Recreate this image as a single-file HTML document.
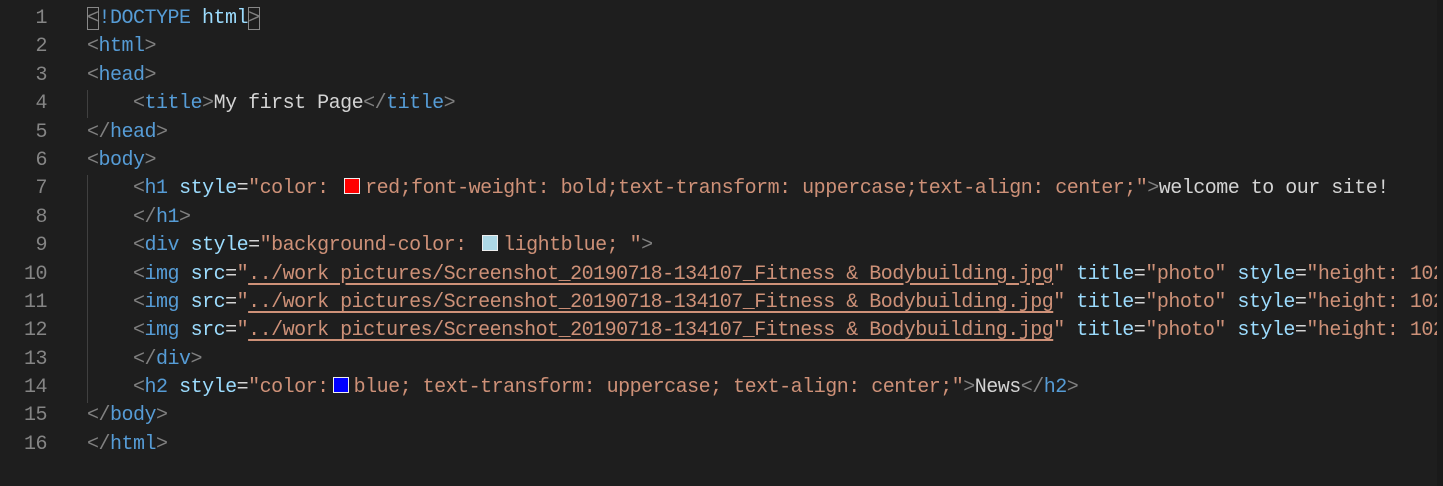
<!DOCTYPE html>
<html><head><style>
html,body{margin:0;padding:0;background:#1e1e1e;width:1443px;height:486px;overflow:hidden}
.ed{position:absolute;left:0;top:5px;font-family:"Liberation Mono",monospace;font-size:20px;letter-spacing:-0.5px}
.l{height:28.4px;line-height:28.4px;position:relative}
.n{position:absolute;left:0;width:47px;text-align:right;color:#858585}
.c{position:absolute;left:87px;color:#d4d4d4;white-space:pre}
.g{color:#808080}.t{color:#569cd6}.a{color:#9cdcfe}.s{color:#ce9178}.u{text-decoration:underline;text-decoration-color:#ce9178;text-underline-offset:4px;text-decoration-thickness:2px}
.sw{display:inline-block;width:14px;height:14px;border:1px solid #eee;margin:0 5px 0 4px;vertical-align:-1px}
.bx{outline:1px solid #888;outline-offset:-1px}
.guide{position:absolute;left:87px;width:1px;background:#404040}
.sb{position:absolute;right:0;top:0;width:6px;height:486px;background:#1a1a1a}
</style></head><body>
<div class="guide" style="top:90px;height:28px"></div>
<div class="guide" style="top:175px;height:228px"></div>
<div class="ed">
<div class="l"><span class="n">1</span><span class="c"><span class="g bx">&lt;</span><span class="t">!DOCTYPE</span> <span class="a">html</span><span class="g bx">&gt;</span></span></div>
<div class="l"><span class="n">2</span><span class="c"><span class="g">&lt;</span><span class="t">html</span><span class="g">&gt;</span></span></div>
<div class="l"><span class="n">3</span><span class="c"><span class="g">&lt;</span><span class="t">head</span><span class="g">&gt;</span></span></div>
<div class="l"><span class="n">4</span><span class="c">    <span class="g">&lt;</span><span class="t">title</span><span class="g">&gt;</span>My first Page<span class="g">&lt;/</span><span class="t">title</span><span class="g">&gt;</span></span></div>
<div class="l"><span class="n">5</span><span class="c"><span class="g">&lt;/</span><span class="t">head</span><span class="g">&gt;</span></span></div>
<div class="l"><span class="n">6</span><span class="c"><span class="g">&lt;</span><span class="t">body</span><span class="g">&gt;</span></span></div>
<div class="l"><span class="n">7</span><span class="c">    <span class="g">&lt;</span><span class="t">h1</span> <span class="a">style</span>=<span class="s">"color: <span class="sw" style="background:red"></span>red;font-weight: bold;text-transform: uppercase;text-align: center;"</span><span class="g">&gt;</span>welcome to our site!</span></div>
<div class="l"><span class="n">8</span><span class="c">    <span class="g">&lt;/</span><span class="t">h1</span><span class="g">&gt;</span></span></div>
<div class="l"><span class="n">9</span><span class="c">    <span class="g">&lt;</span><span class="t">div</span> <span class="a">style</span>=<span class="s">"background-color: <span class="sw" style="background:lightblue"></span>lightblue; "</span><span class="g">&gt;</span></span></div>
<div class="l"><span class="n">10</span><span class="c">    <span class="g">&lt;</span><span class="t">img</span> <span class="a">src</span>=<span class="s">"<span class="u">../work pictures/Screenshot_20190718-134107_Fitness &amp; Bodybuilding.jpg</span>"</span> <span class="a">title</span>=<span class="s">"photo"</span> <span class="a">style</span>=<span class="s">"height: 102</span></span></div>
<div class="l"><span class="n">11</span><span class="c">    <span class="g">&lt;</span><span class="t">img</span> <span class="a">src</span>=<span class="s">"<span class="u">../work pictures/Screenshot_20190718-134107_Fitness &amp; Bodybuilding.jpg</span>"</span> <span class="a">title</span>=<span class="s">"photo"</span> <span class="a">style</span>=<span class="s">"height: 102</span></span></div>
<div class="l"><span class="n">12</span><span class="c">    <span class="g">&lt;</span><span class="t">img</span> <span class="a">src</span>=<span class="s">"<span class="u">../work pictures/Screenshot_20190718-134107_Fitness &amp; Bodybuilding.jpg</span>"</span> <span class="a">title</span>=<span class="s">"photo"</span> <span class="a">style</span>=<span class="s">"height: 102</span></span></div>
<div class="l"><span class="n">13</span><span class="c">    <span class="g">&lt;/</span><span class="t">div</span><span class="g">&gt;</span></span></div>
<div class="l"><span class="n">14</span><span class="c">    <span class="g">&lt;</span><span class="t">h2</span> <span class="a">style</span>=<span class="s">"color:<span class="sw" style="background:blue"></span>blue; text-transform: uppercase; text-align: center;"</span><span class="g">&gt;</span>News<span class="g">&lt;/</span><span class="t">h2</span><span class="g">&gt;</span></span></div>
<div class="l"><span class="n">15</span><span class="c"><span class="g">&lt;/</span><span class="t">body</span><span class="g">&gt;</span></span></div>
<div class="l"><span class="n">16</span><span class="c"><span class="g">&lt;/</span><span class="t">html</span><span class="g">&gt;</span></span></div>
</div>
<div class="sb"></div>
</body></html>
